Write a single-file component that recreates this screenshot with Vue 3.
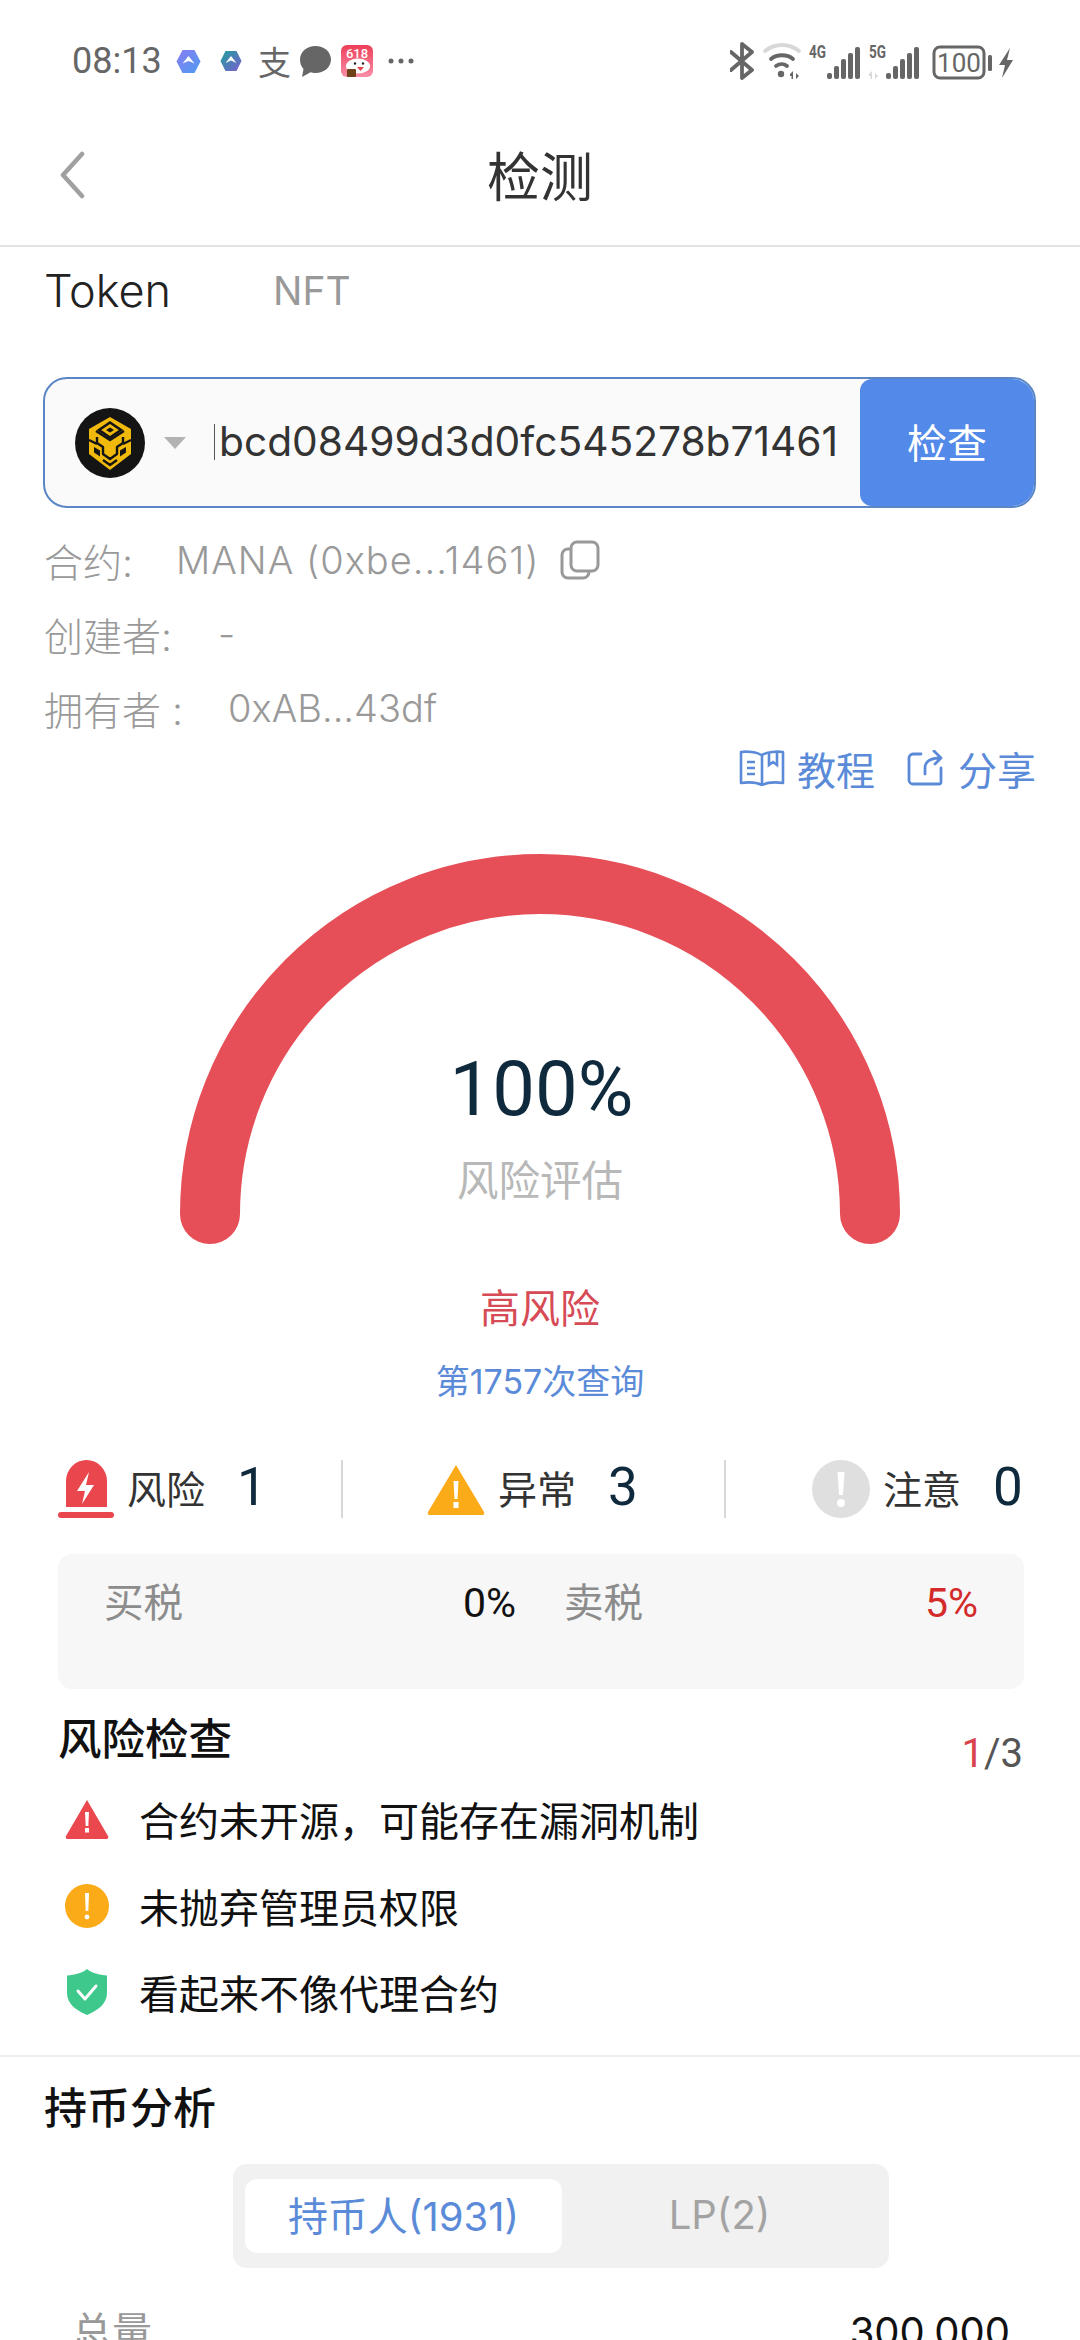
<script setup>
const stats = [
  { key: 'risk', label: '风险', count: 1 },
  { key: 'warn', label: '异常', count: 3 },
  { key: 'note', label: '注意', count: 0 },
]
</script>

<template>
  <div class="page">
    <div class="status">
      <div class="status-left">
        <span class="time">08:13</span>
        <svg class="st-hex" viewBox="0 0 25 25">
          <defs>
            <linearGradient id="hexa" x1="0" y1="0" x2="1" y2="1"><stop offset="0" stop-color="#8a7cf2" /><stop offset="1" stop-color="#4d9bf0" /></linearGradient>
            <linearGradient id="hexb" x1="0" y1="0" x2="1" y2="1"><stop offset="0" stop-color="#1f9e9b" /><stop offset="1" stop-color="#7a5fd0" /></linearGradient>
            <linearGradient id="app618" x1="0" y1="0" x2="0" y2="1"><stop offset="0" stop-color="#ee3e58" /><stop offset="1" stop-color="#f98fa8" /></linearGradient>
          </defs>
          <path d="M6.500 1h12l6 11.500-6 11.500h-12L.5 12.500z" fill="url(#hexa)" />
          <path d="M12.500 7l6 7.500-6-2.500-6 2.500z" fill="#fff" />
        </svg>
        <svg class="st-hex2" viewBox="0 0 22 22">
          <path d="M5.500 1h11L21.500 11l-5 10h-11L.5 11z" fill="url(#hexb)" />
          <path d="M11 6l5.500 7-5.500-2.500L5.500 13z" fill="#fff" />
        </svg>
        <span class="st-ali">支</span>
        <svg class="st-chat" viewBox="0 0 31 31">
          <path d="M15.500 0C24 0 31 5.800 31 13.500S24 27 15.500 27c-2 0-3.500-.2-5-.7L2 31l1.500-8C1.200 20.500 0 17.200 0 13.500 0 5.800 7 0 15.500 0z" fill="#666" />
        </svg>
        <svg class="st-app" viewBox="0 0 32 32">
          <rect width="32" height="32" rx="6" fill="url(#app618)" />
          <text x="16" y="12.500" text-anchor="middle" class="app-num">618</text>
          <ellipse cx="17" cy="21" rx="12" ry="7.500" fill="#fff" />
          <circle cx="14" cy="18.500" r="1.200" fill="#222" />
          <circle cx="22" cy="18.500" r="1.200" fill="#222" />
          <path d="M16 22h7l-3.500 4z" fill="#e8404c" />
          <rect x="6" y="24" width="9" height="8" rx="1" fill="#6e431a" />
        </svg>
        <svg class="st-dots" viewBox="0 0 26 6">
          <circle cx="3" cy="3" r="2.500" fill="#666" />
          <circle cx="13" cy="3" r="2.500" fill="#666" />
          <circle cx="23" cy="3" r="2.500" fill="#666" />
        </svg>
      </div>
      <svg class="status-right" viewBox="0 0 290 40">
        <!-- bluetooth -->
        <path d="M1 11l21 18-10 8V3l10 8L1 29" fill="none" stroke="#666" stroke-width="3.800" stroke-linejoin="round" stroke-linecap="round" />
        <!-- wifi -->
        <path d="M35 10c10-8 24-8 34 0" fill="none" stroke="#d8d8d8" stroke-width="3.800" stroke-linecap="round" />
        <path d="M41 18c6-5 16-5 22 0" fill="none" stroke="#666" stroke-width="3.800" stroke-linecap="round" />
        <path d="M46 25c3.500-2.500 8-2.500 11 0" fill="none" stroke="#666" stroke-width="3.800" stroke-linecap="round" />
        <circle cx="51" cy="33" r="3.200" fill="#666" />
        <path d="M60 33l3-3v8h-1.500v-3H60zM66 30v8l3-3-3-3z" fill="#666" />
        <!-- 4G -->
        <text x="79" y="17" class="net" textLength="17" lengthAdjust="spacingAndGlyphs">4G</text>
        <rect x="97" y="32" width="5" height="6" rx="2" fill="#666" />
        <rect x="104" y="25" width="5" height="13" rx="2" fill="#666" />
        <rect x="111" y="18" width="5" height="20" rx="2" fill="#666" />
        <rect x="118" y="12" width="5" height="26" rx="2" fill="#666" />
        <rect x="125" y="6" width="5" height="32" rx="2" fill="#666" />
        <!-- 5G -->
        <text x="139" y="17" class="net" textLength="17" lengthAdjust="spacingAndGlyphs">5G</text>
        <path d="M139 33l3-3v8h-1.500v-3H139zM145 30v8l3-3-3-3z" fill="#d8d8d8" />
        <rect x="156" y="32" width="5" height="6" rx="2" fill="#666" />
        <rect x="163" y="25" width="5" height="13" rx="2" fill="#666" />
        <rect x="170" y="18" width="5" height="20" rx="2" fill="#666" />
        <rect x="177" y="12" width="5" height="26" rx="2" fill="#666" />
        <rect x="184" y="6" width="5" height="32" rx="2" fill="#666" />
        <!-- battery -->
        <rect x="204" y="6" width="50" height="31" rx="6" fill="none" stroke="#666" stroke-width="3" />
        <text x="229" y="31" text-anchor="middle" class="batt">100</text>
        <rect x="258" y="14" width="4" height="16" rx="1.500" fill="#666" />
        <path d="M280 7l-11 17h6l-3 13 11-18h-6z" fill="#666" />
      </svg>
    </div>

    <div class="nav">
      <svg class="back" viewBox="0 0 26 48">
        <path d="M23 3L4 24l19 21" fill="none" stroke="#a0a0a0" stroke-width="4.500" stroke-linecap="round" stroke-linejoin="round" />
      </svg>
      <span class="nav-title">检测</span>
    </div>

    <div class="tabs">
      <span class="tab active">Token</span>
      <span class="tab">NFT</span>
    </div>

    <div class="search">
      <svg class="bnb" viewBox="0 0 70 70">
        <circle cx="35" cy="35" r="35" fill="#141414" />
        <path d="M35 9l21 12v25L35 62 14 46V21z" fill="#f0b90b" />
        <path d="M35 14.500l11 7.500-11 7.500-11-7.500z" fill="none" stroke="#141414" stroke-width="2.600" />
        <path d="M35 19.500l4 2.500-4 2.500-4-2.500z" fill="#141414" />
        <path d="M21 23l14 9 14-9M22 29v6l6 4v7l7 5 7-5v-7l6-4v-6M14 32l8 4M56 32l-8 4M28 52l7 5 7-5" fill="none" stroke="#141414" stroke-width="2.400" stroke-linejoin="round" />
        <path d="M19 39l6 3.500v6l-6-4zM51 39l-6 3.500v6l6-4z" fill="#141414" />
      </svg>
      <span class="caret"></span>
      <div class="address"><span class="cursor"></span>bcd08499d3d0fc545278b71461</div>
      <button class="check">检查</button>
    </div>

    <div class="info">
      <div class="info-row">
        <span class="info-label wide">合约:</span>
        <span class="contract">MANA (0xbe...1461)</span>
        <svg class="copy" viewBox="0 0 40 40">
          <rect x="11" y="2" width="27" height="29" rx="6" fill="none" stroke="#999" stroke-width="3" />
          <path d="M11 9H8a6 6 0 0 0-6 6v17a6 6 0 0 0 6 6h15a6 6 0 0 0 6-6v-1" fill="none" stroke="#999" stroke-width="3" />
        </svg>
      </div>
      <div class="info-row">
        <span class="info-label mid">创建者:</span>
        <span>-</span>
      </div>
      <div class="info-row">
        <span class="info-label long">拥有者 :</span>
        <span>0xAB...43df</span>
      </div>
    </div>

    <div class="links">
      <svg class="book" viewBox="0 0 46 36">
        <path d="M22 5C18 2 8 1 2 2v31c7-1 15-1 21 2 6-3 14-3 21-2V2c-6-1-16 0-21 3v30" fill="none" stroke="#5b8bd8" stroke-width="2.600" stroke-linejoin="round" />
        <path d="M8 12h8M8 18h8M8 24h8" stroke="#5b8bd8" stroke-width="2.600" />
        <path d="M30 3v12l4-3 4 3V2" fill="none" stroke="#5b8bd8" stroke-width="2.600" />
      </svg>
      <span class="link-text">教程</span>
      <svg class="share" viewBox="0 0 36 36">
        <path d="M14 4H6a4 4 0 0 0-4 4v22a4 4 0 0 0 4 4h26a2 2 0 0 0 2-2V18" fill="none" stroke="#5b8bd8" stroke-width="2.800" stroke-linecap="round" />
        <path d="M18 24v-6c0-6 5-10 15-10M27 1l7 7-6 6" fill="none" stroke="#5b8bd8" stroke-width="2.800" stroke-linecap="round" stroke-linejoin="round" />
      </svg>
      <span class="link-text">分享</span>
    </div>

    <div class="gauge">
      <svg class="arc" viewBox="0 0 720 390">
        <path d="M30 360A330 330 0 0 1 690 360" fill="none" stroke="#e64f58" stroke-width="60" stroke-linecap="round" />
      </svg>
      <div class="gauge-text">
        <div class="percent">100%</div>
        <div class="gauge-label">风险评估</div>
      </div>
    </div>

    <div class="level">高风险</div>
    <div class="query">第1757次查询</div>

    <div class="stats">
      <template v-for="(s, i) in stats" :key="s.key">
        <span v-if="i > 0" class="stat-line"></span>
        <div class="stat" :class="s.key">
          <svg v-if="s.key === 'risk'" class="stat-icon siren" viewBox="0 0 56 58">
            <path d="M8 47V21a20.500 21 0 0 1 41 0v26z" fill="#e9474d" />
            <path d="M31 12L19 31h8l-3 13 12-19h-8z" fill="#fff" />
            <rect x="0" y="52" width="56" height="6" rx="3" fill="#e9474d" />
          </svg>
          <svg v-else-if="s.key === 'warn'" class="stat-icon tri" viewBox="0 0 58 52">
            <path d="M29 2L57 49a2 2 0 0 1-2 3H3a2 2 0 0 1-2-3z" fill="#fbaa18" />
            <path d="M26.500 18h5l-1 18h-3z" fill="#fff" />
            <rect x="26.500" y="39" width="5" height="6" fill="#fff" />
          </svg>
          <svg v-else class="stat-icon dot" viewBox="0 0 58 58">
            <circle cx="29" cy="29" r="29" fill="#dfdfdf" />
            <path d="M25.500 12h7l-1.500 23h-4z" fill="#fff" />
            <circle cx="29" cy="43" r="4" fill="#fff" />
          </svg>
          <span class="stat-label">{{ s.label }}</span>
          <span class="stat-num">{{ s.count }}</span>
        </div>
      </template>
    </div>

    <div class="tax">
      <span class="tax-label">买税</span>
      <span class="tax-val">0%</span>
      <span class="tax-label">卖税</span>
      <span class="tax-val red">5%</span>
    </div>

    <div class="check-head">
      <span class="check-title">风险检查</span>
      <span class="check-count"><em>1</em>/3</span>
    </div>
    <div class="check-row">
      <svg class="row-icon" viewBox="0 0 44 40">
        <path d="M22 1L43 37a2 2 0 0 1-2 3H3a2 2 0 0 1-2-3z" fill="#ea474e" />
        <path d="M20 13h4l-.7 14h-2.600z" fill="#fff" />
        <rect x="20" y="29" width="4" height="4.500" fill="#fff" />
      </svg>
      <span>合约未开源，可能存在漏洞机制</span>
    </div>
    <div class="check-row">
      <svg class="row-icon" viewBox="0 0 44 44">
        <circle cx="22" cy="22" r="22" fill="#fbaa18" />
        <path d="M20 9h4l-.7 18h-2.600z" fill="#fff" />
        <circle cx="22" cy="33" r="2.400" fill="#fff" />
      </svg>
      <span>未抛弃管理员权限</span>
    </div>
    <div class="check-row">
      <svg class="row-icon shield" viewBox="0 0 40 46">
        <path d="M20 0c5 4 12 6 20 6.500V24c0 10-8 17-20 22C8 41 0 34 0 24V6.500C8 6 15 4 20 0z" fill="#3ec88b" />
        <path d="M11 22l7 8 11-13" fill="none" stroke="#fff" stroke-width="3" stroke-linecap="round" stroke-linejoin="round" />
      </svg>
      <span>看起来不像代理合约</span>
    </div>

    <div class="holders">
      <div class="holders-title">持币分析</div>
      <div class="segment">
        <span class="seg on">持币人(1931)</span>
        <span class="seg">LP(2)</span>
      </div>
      <div class="total">
        <span class="total-label">总量</span>
        <span class="total-val">300,000</span>
      </div>
    </div>
  </div>
</template>

<style>
html,
body {
  margin: 0;
  background: #fff;
}
</style>

<style scoped>
.page {
  width: 1080px;
  height: 2340px;
  overflow: hidden;
  background: #fff;
  font-family: Inter, Roboto, "Noto Sans CJK SC", sans-serif;
  color: #333;
}

.status {
  height: 122px;
  display: flex;
  align-items: center;
  justify-content: space-between;
  padding: 0 60px 0 72px;
  box-sizing: border-box;
}
.status-left {
  display: flex;
  align-items: center;
}
.time {
  width: 90px;
  font-family: Roboto, sans-serif;
  font-size: 36px;
  color: #666;
}
.st-hex {
  width: 25px;
  height: 25px;
  margin-left: 14px;
}
.st-hex2 {
  width: 22px;
  height: 22px;
  margin-left: 19px;
}
.st-ali {
  width: 33px;
  margin-left: 16px;
  font-size: 33px;
  line-height: 33px;
  color: #666;
  font-family: "Noto Sans CJK SC", sans-serif;
}
.st-chat {
  width: 31px;
  height: 31px;
  margin-left: 9px;
}
.st-app {
  width: 32px;
  height: 32px;
  margin-left: 10px;
}
.app-num {
  font-family: Roboto, sans-serif;
  font-size: 13px;
  font-weight: 500;
  fill: #fff;
}
.st-dots {
  width: 26px;
  height: 6px;
  margin-left: 15px;
}
.status-right {
  width: 290px;
  height: 40px;
}
.net {
  font-family: Roboto, sans-serif;
  font-size: 18px;
  font-weight: 700;
  fill: #666;
}
.batt {
  font-family: Roboto, sans-serif;
  font-size: 26px;
  fill: #666;
}

.nav {
  height: 125px;
  box-sizing: border-box;
  padding-bottom: 20px;
  display: flex;
  align-items: center;
  justify-content: center;
  position: relative;
  border-bottom: 2px solid #e3e3e3;
}
.back {
  position: absolute;
  left: 59px;
  top: 29px;
  width: 26px;
  height: 48px;
}
.nav-title {
  font-size: 53px;
  font-family: "Noto Sans CJK SC", sans-serif;
  color: #333;
}

.tabs {
  height: 86px;
  padding-left: 44px;
  display: flex;
  align-items: center;
  gap: 102px;
  margin-bottom: 44px;
}
.tab {
  font-size: 39px;
  color: #999;
}
.tab.active {
  font-size: 45px;
  font-weight: 300;
  color: #222;
}

.search {
  margin: 0 44px 0 43px;
  height: 131px;
  box-sizing: border-box;
  border: 2px solid #5a86c5;
  border-radius: 24px;
  background: #fafafa;
  display: flex;
  align-items: center;
  padding-left: 30px;
}
.bnb {
  width: 70px;
  height: 70px;
  flex: none;
}
.caret {
  margin-left: 19px;
  width: 0;
  height: 0;
  border-left: 11px solid transparent;
  border-right: 11px solid transparent;
  border-top: 12px solid #b3b3b3;
}
.address {
  margin-left: 28px;
  width: 640px;
  flex: none;
  display: flex;
  align-items: center;
  font-size: 40.7px;
  color: #333;
  white-space: nowrap;
  padding-bottom: 2px;
}
.cursor {
  width: 1px;
  height: 36px;
  background: #555;
  margin-right: 4px;
}
.check {
  width: 174px;
  height: 127px;
  flex: none;
  margin-left: auto;
  border: 0;
  padding: 0 0 4px;
  background: #5389e8;
  color: #fff;
  font-size: 40px;
  font-family: "Noto Sans CJK SC", sans-serif;
  border-radius: 12px 22px 22px 12px;
}

.info {
  margin-top: 15px;
  padding-left: 44px;
  font-size: 38px;
  color: #999;
  font-weight: 300;
}
.info-row {
  height: 74px;
  display: flex;
  align-items: center;
}
.info-label {
  flex: none;
  font-size: 39px;
}
.info-label.wide {
  width: 132px;
}
.info-label.mid {
  width: 174px;
}
.info-label.long {
  width: 184px;
}
.contract {
  letter-spacing: 1px;
}
.copy {
  width: 40px;
  height: 40px;
  margin-left: 20px;
}

.links {
  height: 46px;
  display: flex;
  align-items: center;
  justify-content: flex-end;
  padding-right: 44px;
  color: #5b8bd8;
}
.book {
  width: 46px;
  height: 36px;
  margin-right: 12px;
}
.share {
  width: 36px;
  height: 36px;
  margin: 0 15px 0 32px;
}
.link-text {
  font-size: 39px;
}

.gauge {
  position: relative;
  width: 720px;
  height: 390px;
  margin: 63px auto 0;
}
.arc {
  width: 720px;
  height: 390px;
  display: block;
}
.gauge-text {
  position: absolute;
  left: 0;
  right: 0;
  top: 190px;
  text-align: center;
}
.percent {
  padding-left: 3px;
  font-family: Roboto, sans-serif;
  font-size: 76px;
  line-height: 90px;
  color: #0f2a3c;
}
.gauge-label {
  margin-top: 20px;
  font-size: 41.5px;
  line-height: 54px;
  color: #b8b8b8;
}

.level {
  margin-top: 40px;
  text-align: center;
  font-size: 40px;
  line-height: 50px;
  color: #d64b55;
}
.query {
  margin-top: 26px;
  text-align: center;
  font-size: 34px;
  line-height: 44px;
  color: #5b8bd8;
}

.stats {
  margin-top: 56px;
  height: 58px;
  padding-left: 58px;
  display: flex;
  align-items: center;
}
.stat {
  display: flex;
  align-items: center;
  box-sizing: border-box;
}
.stat.risk {
  width: 283px;
}
.stat.warn {
  width: 381px;
  padding-left: 84px;
}
.stat.note {
  padding-left: 86px;
}
.stat-line {
  width: 2px;
  height: 58px;
  flex: none;
  background: #d8d8d8;
}
.stat-icon {
  flex: none;
}
.siren {
  width: 56px;
  height: 58px;
}
.tri {
  width: 58px;
  height: 52px;
}
.dot {
  width: 58px;
  height: 58px;
}
.stat-label {
  margin-left: 13px;
  padding-bottom: 4px;
  font-size: 39px;
  color: #333;
}
.stat-num {
  margin-left: 32px;
  padding-bottom: 4px;
  font-family: Roboto, sans-serif;
  font-size: 53px;
  color: #0f2a3c;
}

.tax {
  margin: 36px 56px 0 58px;
  height: 135px;
  box-sizing: border-box;
  padding: 25px 46px 0;
  background: #f7f7f7;
  border-radius: 14px;
  display: grid;
  grid-template-columns: 359px 101px 361px auto;
  align-items: start;
  font-size: 39.5px;
  line-height: 48px;
}
.tax-label {
  color: #8c8c8c;
}
.tax-val {
  color: #111;
  font-family: Roboto, sans-serif;
  font-size: 41px;
}
.tax-val.red {
  color: #d42a2a;
}

.check-head {
  margin: 26px 57px 0 58px;
  display: flex;
  justify-content: space-between;
  height: 61px;
}
.check-title {
  font-size: 43.5px;
  line-height: 48px;
  font-weight: 500;
  color: #111;
}
.check-count {
  font-size: 40px;
  line-height: 48px;
  margin-top: 15px;
  font-family: Roboto, sans-serif;
  color: #555;
}
.check-count em {
  font-style: normal;
  color: #d8434e;
}
.check-row {
  height: 86.500px;
  padding-left: 65px;
  display: flex;
  align-items: center;
  font-size: 40px;
  color: #111;
}
.row-icon {
  width: 44px;
  height: 44px;
  margin-right: 30px;
  flex: none;
}
.row-icon.shield {
  height: 46px;
}

.holders {
  margin-top: 19px;
  border-top: 2px solid #eee;
  padding-top: 27px;
}
.holders-title {
  padding-left: 44px;
  font-size: 43px;
  line-height: 48px;
  font-weight: 500;
  color: #111;
}
.segment {
  margin: 32px 0 0 233px;
  width: 656px;
  height: 104px;
  box-sizing: border-box;
  padding: 15px 12px;
  background: #f1f1f1;
  border-radius: 14px;
  display: flex;
}
.seg {
  flex: 1;
  display: flex;
  align-items: center;
  justify-content: center;
  padding-bottom: 3px;
  font-size: 40px;
  color: #a3a3a3;
}
.seg.on {
  flex: none;
  width: 317px;
  background: #fff;
  border-radius: 12px;
  color: #5b8bd8;
}
.total {
  margin-top: 40px;
  padding: 0 70px 0 72px;
  display: flex;
  justify-content: space-between;
  font-size: 40px;
  line-height: 48px;
}
.total-label {
  color: #999;
}
.total-val {
  color: #111;
}
</style>
